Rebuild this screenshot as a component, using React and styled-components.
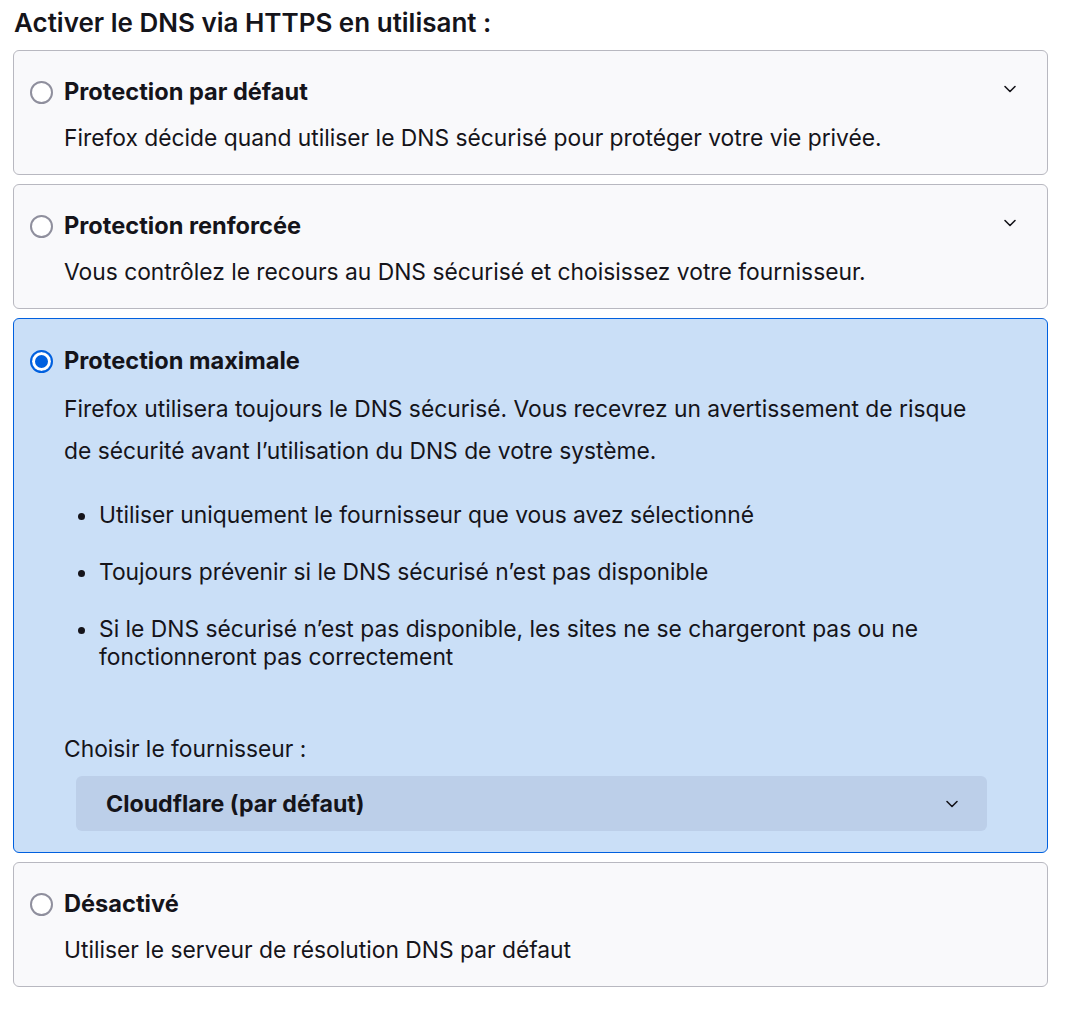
import React from "react";
import styled, { createGlobalStyle } from "styled-components";

const GlobalStyle = createGlobalStyle`
  body {
    margin: 0;
    background: #ffffff;
    font-family: Inter, "Noto Sans", sans-serif;
    color: #15141a;
  }
`;

const Page = styled.div`
  width: 1035px;
  padding: 8px 0 0 13px;
`;

const Heading = styled.h2`
  margin: 0 0 13px 1px;
  font-size: 26px;
  line-height: 29px;
  font-weight: 600;
`;

const Options = styled.div`
  display: flex;
  flex-direction: column;
  gap: 9px;
`;

const Card = styled.div`
  position: relative;
  border: 1px solid ${(p) => (p.selected ? "#0060df" : "#b8b8c0")};
  border-radius: 6px;
  background: ${(p) => (p.selected ? "#cadff7" : "#f9f9fb")};
  padding: ${(p) => (p.selected ? "29px 16px 21px" : "28px 16px 22px")} 16px;
`;

const TitleRow = styled.div`
  display: flex;
  align-items: center;
  gap: 11px;
  height: 26px;
`;

const Radio = styled.span`
  box-sizing: border-box;
  width: 23px;
  height: 23px;
  border-radius: 50%;
  flex: none;
  background: #ffffff;
  border: 2px solid ${(p) => (p.checked ? "#0060df" : "#8f8f9d")};
  box-shadow: ${(p) => (p.checked ? "inset 0 0 0 3px #ffffff, inset 0 0 0 12px #0060df" : "none")};
`;

const Title = styled.span`
  font-size: 23.6px;
  font-weight: 700;
  line-height: 26px;
`;

const Chevron = styled.svg`
  position: absolute;
  top: 31px;
  right: 30px;
  width: 14px;
  height: 14px;
`;

const Body = styled.div`
  margin-left: 34px;
`;

const Description = styled.p`
  margin: ${(p) => (p.tall ? "14px" : "19px")} 0 0 0;
  max-width: 920px;
  font-size: 22.8px;
  line-height: ${(p) => (p.tall ? "42px" : "28px")};
`;

const List = styled.ul`
  margin: 29px 0 0 0;
  padding: 0 0 0 35px;
  max-width: 885px;
  display: flex;
  flex-direction: column;
  gap: 29px;
  font-size: 22.8px;
  line-height: 28px;
`;

const Label = styled.div`
  margin-top: 64px;
  font-size: 22.8px;
  line-height: 28px;
`;

const Select = styled.div`
  margin: 13px 44px 0 12px;
  height: 55px;
  border-radius: 6px;
  background: #bccfe9;
  display: flex;
  align-items: center;
  justify-content: space-between;
  padding: 1px 28px 0 30px;
  box-sizing: border-box;
  font-size: 23.2px;
  font-weight: 700;
`;

const SelectChevron = styled.svg`
  width: 14px;
  height: 14px;
`;

const ChevronPath = () => (
  <path
    d="M2 4.5 L7 9.5 L12 4.5"
    stroke="#15141a"
    strokeWidth="1.6"
    strokeLinecap="round"
    strokeLinejoin="round"
  />
);

const Option = ({ title, description, selected, collapsible, children }) => (
  <Card selected={selected}>
    <TitleRow>
      <Radio checked={selected} />
      <Title>{title}</Title>
    </TitleRow>
    {collapsible && (
      <Chevron viewBox="0 0 14 14" fill="none">
        <ChevronPath />
      </Chevron>
    )}
    <Body>
      <Description tall={selected}>{description}</Description>
      {children}
    </Body>
  </Card>
);

export default function App() {
  return (
    <>
      <GlobalStyle />
      <Page>
        <Heading>Activer le DNS via HTTPS en utilisant :</Heading>
        <Options>
          <Option
            collapsible
            title="Protection par défaut"
            description="Firefox décide quand utiliser le DNS sécurisé pour protéger votre vie privée."
          />
          <Option
            collapsible
            title="Protection renforcée"
            description="Vous contrôlez le recours au DNS sécurisé et choisissez votre fournisseur."
          />
          <Option
            selected
            title="Protection maximale"
            description="Firefox utilisera toujours le DNS sécurisé. Vous recevrez un avertissement de risque de sécurité avant l’utilisation du DNS de votre système."
          >
            <List>
              <li>Utiliser uniquement le fournisseur que vous avez sélectionné</li>
              <li>Toujours prévenir si le DNS sécurisé n’est pas disponible</li>
              <li>
                Si le DNS sécurisé n’est pas disponible, les sites ne se chargeront pas ou ne
                fonctionneront pas correctement
              </li>
            </List>
            <Label>Choisir le fournisseur :</Label>
            <Select>
              <span>Cloudflare (par défaut)</span>
              <SelectChevron viewBox="0 0 14 14" fill="none">
                <ChevronPath />
              </SelectChevron>
            </Select>
          </Option>
          <Option title="Désactivé" description="Utiliser le serveur de résolution DNS par défaut" />
        </Options>
      </Page>
    </>
  );
}
